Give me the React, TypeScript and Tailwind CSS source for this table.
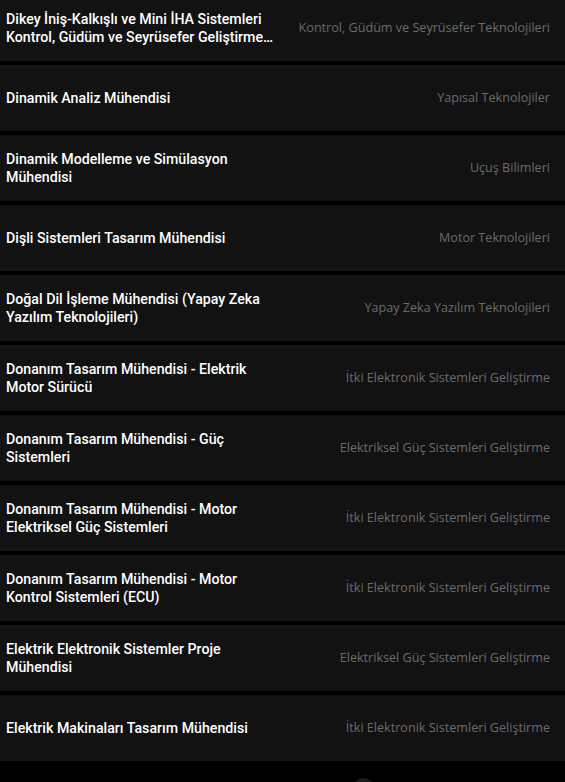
import React from "react";

const rows: [string, string][] = [
  ["Dikey İniş-Kalkışlı ve Mini İHA Sistemleri Kontrol, Güdüm ve Seyrüsefer Geliştirme Mühendisi", "Kontrol, Güdüm ve Seyrüsefer Teknolojileri"],
  ["Dinamik Analiz Mühendisi", "Yapısal Teknolojiler"],
  ["Dinamik Modelleme ve Simülasyon Mühendisi", "Uçuş Bilimleri"],
  ["Dişli Sistemleri Tasarım Mühendisi", "Motor Teknolojileri"],
  ["Doğal Dil İşleme Mühendisi (Yapay Zeka Yazılım Teknolojileri)", "Yapay Zeka Yazılım Teknolojileri"],
  ["Donanım Tasarım Mühendisi - Elektrik Motor Sürücü", "İtki Elektronik Sistemleri Geliştirme"],
  ["Donanım Tasarım Mühendisi - Güç Sistemleri", "Elektriksel Güç Sistemleri Geliştirme"],
  ["Donanım Tasarım Mühendisi - Motor Elektriksel Güç Sistemleri", "İtki Elektronik Sistemleri Geliştirme"],
  ["Donanım Tasarım Mühendisi - Motor Kontrol Sistemleri (ECU)", "İtki Elektronik Sistemleri Geliştirme"],
  ["Elektrik Elektronik Sistemler Proje Mühendisi", "Elektriksel Güç Sistemleri Geliştirme"],
  ["Elektrik Makinaları Tasarım Mühendisi", "İtki Elektronik Sistemleri Geliştirme"],
];

export default function App() {
  return (
    <div className="relative h-[782px] w-[565px] overflow-hidden bg-black">
      <div className="mt-[-5px] flex flex-col gap-[4px]">
        {rows.map(([title, dept], i) => (
          <div key={i} className="flex h-[66px] items-center bg-[#121212]">
            <div className="w-1/2 pl-[6px]">
              <div
                className="line-clamp-2 text-[14.2px] font-medium leading-[18px] text-white"
                style={{ fontFamily: "Roboto, 'Noto Sans', sans-serif" }}
              >
                {title}
              </div>
            </div>
            <div
              className="flex-1 pr-[15px] text-right text-[12.6px] leading-[18px] text-[#6b6b6b]"
              style={{ fontFamily: "'Open Sans', sans-serif" }}
            >
              {dept}
            </div>
          </div>
        ))}
      </div>
      <div className="absolute left-[353px] top-[778px] h-[20px] w-[20px] rounded-full bg-[#1c1c1c]" />
    </div>
  );
}
